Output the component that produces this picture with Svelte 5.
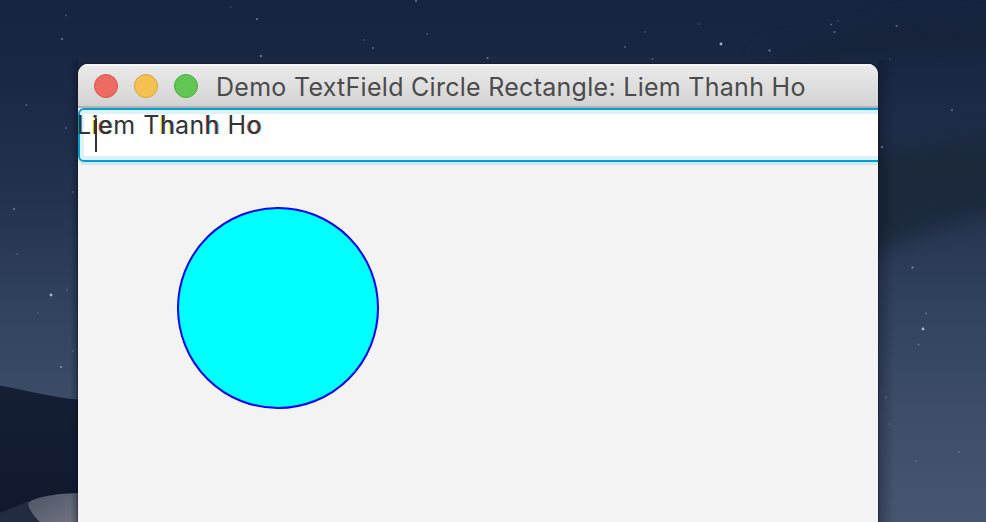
<script>
  const stars = [
    [66, 15.5, .3], [62, 39, .6], [257, 19, .6], [261, 56, .7], [231, 7, .2], [416, 1, .5],
    [427, 34, .3], [364, 40, .25], [373, 48, .45], [487.5, 58, .6], [625, 47, .4],
    [645, 32, .25], [652.5, 59, .4], [699, 24, .2], [721, 44, 1], [769.5, 50.5, .7],
    [831, 24.5, .4], [834.5, 32, .5], [838, 21, .2], [896.5, 26, .5], [890, 59, .2],
    [26.5, 105, .4], [66, 128, .4], [73, 192, .25], [14, 209, .6], [17, 254, .25],
    [51, 295, 1], [67, 290, .25], [38, 313, .2], [73, 351, .2], [61, 367, .7],
    [952, 110, .5], [882, 147, .6], [912.5, 267.5, .7], [926, 313.5, .4], [923, 329, 1],
    [918.5, 344.5, .4], [886, 397.5, .3], [889, 424, .2], [959, 452, .3], [916, 461, .3]
  ];
  const lights = ['red', 'yellow', 'green'];
</script>

<main>
  <svg class="wallpaper" viewBox="0 0 986 522" aria-hidden="true">
    <defs>
      <linearGradient id="night" x1="0" y1="0" x2="0" y2="1">
        <stop offset="0" stop-color="#17243f" />
        <stop offset=".15" stop-color="#1a2845" />
        <stop offset=".38" stop-color="#23324f" />
        <stop offset=".6" stop-color="#32435f" />
        <stop offset=".8" stop-color="#3e4e69" />
        <stop offset="1" stop-color="#465671" />
      </linearGradient>
      <linearGradient id="dune" x1="0" y1="0" x2="0" y2="1">
        <stop offset="0" stop-color="#141f35" />
        <stop offset="1" stop-color="#10182d" />
      </linearGradient>
      <linearGradient id="sand" x1="0" y1="0" x2="1" y2="1">
        <stop offset="0" stop-color="#4d5365" />
        <stop offset="1" stop-color="#747785" />
      </linearGradient>
      <linearGradient id="edge" x1="0" y1="0" x2="1" y2="0">
        <stop offset="0" stop-color="#080e1c" stop-opacity=".35" />
        <stop offset="1" stop-color="#080e1c" stop-opacity="0" />
      </linearGradient>
      <filter id="soft" x="-60%" y="-100%" width="220%" height="300%" color-interpolation-filters="sRGB">
        <feGaussianBlur stdDeviation="10" />
      </filter>
      <filter id="slight" color-interpolation-filters="sRGB"><feGaussianBlur stdDeviation=".7" /></filter>
    </defs>
    <rect width="986" height="522" fill="url(#night)" />
    <path d="M755 55L850 35L920 18L1020 28V50L900 52L800 64Z" fill="#152237" opacity=".8" filter="url(#soft)" />
    <path d="M840 155L920 145L960 136L1020 138V205L930 230L840 265Z" fill="#1b2839" opacity=".85" filter="url(#soft)" />
    <g filter="url(#slight)">
      <path d="M-3 385C20 389 50 397 81 400V525H-3Z" fill="url(#dune)" />
      <path d="M-3 514L29 501L50 525H-3Z" fill="#222c40" />
      <path d="M28 503C34 497 58 493 82 493V525H43C35 518 29 510 28 503Z" fill="url(#sand)" />
    </g>
    <rect x="878" y="60" width="16" height="462" fill="url(#edge)" />
    <rect x="-78" y="60" width="8" height="462" fill="url(#edge)" transform="scale(-1 1)" />
    {#each stars as [x, y, glow]}
      <circle cx={x} cy={y} r={glow > .8 ? 1.4 : 1.1} fill="#c3d3e3" opacity={glow * .8} />
    {/each}
  </svg>

  <section class="window">
    <header>
      <div class="lights">
        {#each lights as light}<i class={light}></i>{/each}
      </div>
      <h1>Demo TextField Circle Rectangle: Liem Thanh Ho</h1>
    </header>
    <div class="field">
      <div class="value">L<span class="yb">i</span><span class="rc">e</span>m T<span class="yb">h</span>an<span class="rc">h</span> H<span class="rc">o</span></div>
      <div class="caret"></div>
    </div>
    <svg class="shape" width="202" height="202" viewBox="0 0 202 202">
      <circle cx="101" cy="101" r="100" fill="#00ffff" stroke="#0000ff" stroke-width="2" />
    </svg>
  </section>
</main>

<style>
  :global(body) { margin: 0; }
  main {
    position: relative;
    box-sizing: border-box;
    width: 986px;
    height: 522px;
    padding: 64px 0 0 78px;
    overflow: hidden;
    font-family: Inter, "Liberation Sans", sans-serif;
  }
  .wallpaper { position: absolute; inset: 0; width: 986px; height: 522px; }
  .window {
    position: relative;
    width: 800px;
    height: 458px;
    overflow: hidden;
    border-radius: 10px 10px 0 0;
    background: #f3f3f3;
    box-shadow: 0 0 2px #080e1c;
  }
  header {
    display: flex;
    align-items: center;
    box-sizing: border-box;
    height: 44px;
    padding-left: 16px;
    border-bottom: 2px solid #b3b1b3;
    background: linear-gradient(#ebebeb, #d3d3d3);
    box-shadow: inset 0 2px #f5f5f5;
  }
  .lights { display: flex; gap: 16px; margin-top: 2px; }
  .lights i { box-sizing: border-box; width: 24px; height: 24px; border: 1px solid transparent; border-radius: 50%; }
  .lights .red { background: #ed6b60; border-color: #d65549; }
  .lights .yellow { background: #f5c150; border-color: #d9a23d; }
  .lights .green { background: #62c655; border-color: #4fab40; }
  h1 {
    margin: 3px 0 0 18px;
    font-size: 25px;
    font-weight: 400;
    line-height: 32px;
    letter-spacing: .28px;
    white-space: nowrap;
    color: #4b4b4b;
  }
  .field {
    position: relative;
    box-sizing: border-box;
    width: 806px;
    height: 54px;
    border: 2px solid #039ed3;
    border-radius: 6px;
    background: #fff;
    box-shadow: inset 0 0 0 4px #dcf1f9, 0 3px #cde8f2;
  }
  .value {
    margin: -1px 0 0 -3px;
    font-size: 25px;
    line-height: 32px;
    letter-spacing: .48px;
    white-space: nowrap;
    color: #333;
  }
  .yb { text-shadow: -.7px 0 #ffff00, .7px 0 #2020e8; }
  .rc { text-shadow: -.6px 0 #f03030, .6px 0 #20e8e8; }
  .caret { position: absolute; left: 15px; top: 8px; width: 2px; height: 34px; background: #333; }
  .shape { display: block; margin: 45px 0 0 99px; }
</style>
